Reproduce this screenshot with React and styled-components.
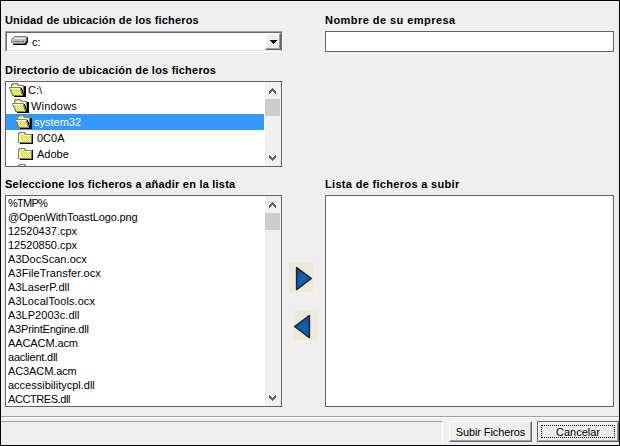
import React from "react";
import styled, { createGlobalStyle, css } from "styled-components";

const GlobalStyle = createGlobalStyle`
  * { box-sizing: border-box; }
  body { margin: 0; font: 11px/14px "Liberation Sans", Arial, sans-serif; color: #000; }
`;

const Window = styled.main`
  width: 620px;
  height: 446px;
  display: flex;
  flex-direction: column;
  overflow: hidden;
  border: 1px solid #000;
  background: #efefef;
`;

const Panels = styled.div`
  display: grid;
  grid-template-columns: 278px 42px 289px;
  grid-template-rows: 180px 226px;
  padding-left: 4px;
  height: 415px;
`;

const Column = styled.section`
  display: flex;
  flex-direction: column;
`;

const Label = styled.label`
  display: block;
  height: ${(p) => p.$height}px;
  padding-top: ${(p) => p.$top}px;
  font-weight: bold;
  line-height: ${(p) => p.$line || 14}px;
  white-space: nowrap;
  letter-spacing: ${(p) => p.$spacing || 0}px;
`;

const Combo = styled.div`
  display: flex;
  align-items: stretch;
  width: 278px;
  height: 21px;
  border: 1px solid;
  border-color: #a0a0a0 #fff #fff #a0a0a0;
  background: #fff;
`;

const ComboInner = styled.div`
  flex: 1;
  display: flex;
  border: 1px solid;
  border-color: #696969 #696969 #e3e3e3 #696969;
`;

const ComboValue = styled.div`
  flex: 1;
  display: flex;
  gap: 4px;
  padding-left: 4px;
  line-height: 19px;
  svg { margin-top: 3px; }
`;

const raised = css`
  border: 1px solid;
  border-color: #fff #696969 #696969 #fff;
  box-shadow: inset -1px -1px #a0a0a0;
  background: #efefef;
`;

const DropButton = styled.button`
  ${raised}
  width: 16px;
  height: 17px;
  padding: 0;
  display: flex;
  align-items: center;
  justify-content: center;
`;

const ListBox = styled.div`
  display: flex;
  width: ${(p) => p.$width}px;
  height: ${(p) => p.$height}px;
  border: 1px solid #646464;
  background: #fff;
  overflow: hidden;
`;

const Items = styled.ul`
  flex: 1;
  margin: 0;
  padding: 0;
  list-style: none;
  overflow: hidden;
`;

const FolderItem = styled.li`
  display: flex;
  gap: ${(p) => p.$gap}px;
  width: 258px;
  height: 16px;
  padding-left: ${(p) => p.$indent}px;
  line-height: 17px;
  letter-spacing: ${(p) => p.$spacing || 0}px;
  color: ${(p) => (p.$selected ? "#fff" : "#000")};
  background: ${(p) => (p.$selected ? "#3399ff" : "#fff")};
`;

const FileItem = styled.li`
  height: 14px;
  padding-left: 2px;
  line-height: 15px;
  white-space: nowrap;
  letter-spacing: ${(p) => p.$spacing || 0}px;
`;

const ScrollTrack = styled.div`
  display: flex;
  flex-direction: column;
  align-items: center;
  width: 16px;
  padding: 6px 1px 5px 0;
  background: #f0f0f0;
`;

const Thumb = styled.div`
  width: 15px;
  height: 17px;
  margin: 5px 0 auto;
  background: #cdcdcd;
`;

const TextInput = styled.input`
  width: 289px;
  height: 21px;
  padding: 2px;
  border: 1px solid #646464;
  border-radius: 0;
  background: #fff;
`;

const Transfer = styled.div`
  display: flex;
  flex-direction: column;
  gap: 19px;
  padding: 82px 0 0 6px;
`;

const ArrowButton = styled.button`
  width: 24px;
  height: 29px;
  padding: 0;
  border: 0;
  margin-left: ${(p) => p.$shift}px;
  background: #eee9d6;
  svg { display: block; }
`;

const Footer = styled.footer`
  display: flex;
  height: 29px;
  padding-top: 4px;
  border-top: 1px solid #a0a0a0;
  box-shadow: inset 0 1px #fff;
`;

const Status = styled.div`
  flex: none;
  width: 442px;
  height: 24px;
  border-top: 1px solid #a0a0a0;
  border-right: 1px solid #fff;
`;

const PushButton = styled.button`
  ${raised}
  width: ${(p) => p.$width}px;
  height: 21px;
  margin-left: ${(p) => p.$gap}px;
  flex: none;
  padding: 0;
  font: 11px/16px "Liberation Sans", Arial, sans-serif;
  letter-spacing: ${(p) => p.$spacing || 0}px;
  ${(p) => p.$focused && css`
    border-color: #646464;
    box-shadow: inset 1px 1px #fff, inset -1px -1px #a0a0a0;
    outline: 1px dotted #000;
    outline-offset: -5px;
  `}
`;

const Chevron = ({ down }) => (
  <svg width="7" height="6" viewBox="0 0 7 6" shapeRendering="crispEdges">
    <path transform={down ? "translate(0 6) scale(1 -1)" : undefined} fill="#606060"
      d="M3 0h1v1h1v1h1v1h1v3H6V5H5V4H4V3H3v1H2v1H1v1H0V3h1V2h1V1h1z" />
  </svg>
);

const Scrollbar = () => (
  <ScrollTrack><Chevron /><Thumb /><Chevron down /></ScrollTrack>
);

const Dither = () => (
  <defs>
    <pattern id="dither" width="2" height="2" patternUnits="userSpaceOnUse">
      <rect width="2" height="2" fill="#ff0" />
      <rect width="1" height="1" fill="#d0d0c8" /><rect x="1" y="1" width="1" height="1" fill="#d0d0c8" />
    </pattern>
  </defs>
);

const OpenFolder = () => (
  <svg width="17" height="16" viewBox="0 0 17 16" shapeRendering="crispEdges">
    <Dither />
    <path fill="#000" d="M15 4h2v11H5v-1h10z" />
    <path fill="url(#dither)" d="M3 2l1-1h4l1 2h5v10H5z" />
    <path fill="none" stroke="#808080" d="M2.5 5V2.5h1v-1h5v1h1v1h5V12" />
    <path fill="url(#dither)" d="M1 6h10l3 7H4z" />
    <path fill="none" stroke="#808080" d="M.5 5.5h11v3h1v3h1v2h-10v-2h-1v-3h-1v-2h-1z" />
    <path stroke="#fff" d="M1 6.5h10M4 4.5h9" />
    <path stroke="#000" d="M12.5 6v2m1 0v3m1 0v3" />
  </svg>
);

const ClosedFolder = () => (
  <svg width="16" height="16" viewBox="0 0 16 16" shapeRendering="crispEdges">
    <Dither />
    <path fill="#000" d="M14 4h1v10H2v-1h12z" />
    <path fill="url(#dither)" stroke="#808080" d="M.5 3.5h1v-1h5v1h1v1h6v8H.5z" />
    <path fill="none" stroke="#fff" d="M1.5 12V4.5M2 3.5h4M7 5.5h6" />
  </svg>
);

const Drive = () => (
  <svg width="17" height="10" viewBox="0 0 17 10">
    <path fill="#000" d="M3 9h12l2-3V1l-2 1z" />
    <path fill="#c0c0c0" stroke="#808080" d="M.5 3.5l3-3h12v4l-2 3H1.5l-1-1z" />
    <path stroke="#eee" d="M3 2.5h11" />
    <path stroke="#777" d="M2 5.5h8" />
    <path stroke="#008000" d="M11 5.5h2" />
    <path stroke="#000" d="M2 8.5h12" />
  </svg>
);

const Arrow = ({ left }) => (
  <svg width="24" height="29" viewBox="0 0 24 29">
    <defs>
      <linearGradient id="blue" x1="0" y1="0" x2="1" y2="1">
        <stop stopColor="#164f91" /><stop offset=".5" stopColor="#1261b2" /><stop offset="1" stopColor="#123f77" />
      </linearGradient>
    </defs>
    <path transform={left ? "translate(24 0) scale(-1 1)" : undefined}
      d="M7.6 4.6V26.6L22.4 15.5z" fill="url(#blue)" stroke="#17263b" strokeWidth="1.5" strokeLinejoin="round" />
  </svg>
);

const folders = [
  { name: "C:\\", indent: 3, open: true },
  { name: "Windows", indent: 6, open: true, spacing: 0.2 },
  { name: "system32", indent: 9, open: true, selected: true },
  { name: "0C0A", indent: 12 },
  { name: "Adobe", indent: 12 },
  { name: "", indent: 12 },
];

const files = [
  ["%TMP%", -0.75], ["@OpenWithToastLogo.png", -0.12], ["12520437.cpx", 0], ["12520850.cpx", 0],
  ["A3DocScan.ocx", 0.05], ["A3FileTransfer.ocx", 0.09], ["A3LaserP.dll", 0.05], ["A3LocalTools.ocx", 0.09],
  ["A3LP2003c.dll", 0.05], ["A3PrintEngine.dll", -0.22], ["AACACM.acm", -0.1], ["aaclient.dll", -0.22],
  ["AC3ACM.acm", -0.1], ["accessibilitycpl.dll", 0], ["ACCTRES.dll", -0.42],
];

export default function App() {
  return (
    <Window>
      <GlobalStyle />
      <Panels>
        <Column>
          <Label $height={30} $top={12} $spacing={0.16}>Unidad de ubicación de los ficheros</Label>
          <Combo>
            <ComboInner>
              <ComboValue><Drive />c:</ComboValue>
              <DropButton aria-label="Abrir">
                <svg width="7" height="4" shapeRendering="crispEdges"><path d="M0 0h7v1H6v1H5v1H4v1H3V3H2V2H1V1H0z" /></svg>
              </DropButton>
            </ComboInner>
          </Combo>
          <Label $height={29} $top={11} $spacing={0.21}>Directorio de ubicación de los ficheros</Label>
          <ListBox $width={277} $height={86}>
            <Items>
              {folders.map((f, i) => (
                <FolderItem key={i} $indent={f.indent} $gap={f.open ? 2 : 3} $spacing={f.spacing} $selected={f.selected}>
                  {f.open ? <OpenFolder /> : <ClosedFolder />}{f.name}
                </FolderItem>
              ))}
            </Items>
            <Scrollbar />
          </ListBox>
        </Column>
        <div />
        <Column>
          <Label $height={30} $top={12} $spacing={0.45}>Nombre de su empresa</Label>
          <TextInput aria-label="Nombre de su empresa" />
        </Column>
        <Column>
          <Label $height={14} $top={0} $line={6} $spacing={0.22}>Seleccione los ficheros a añadir en la lista</Label>
          <ListBox $width={277} $height={212}>
            <Items>{files.map(([name, spacing]) => <FileItem key={name} $spacing={spacing}>{name}</FileItem>)}</Items>
            <Scrollbar />
          </ListBox>
        </Column>
        <Transfer>
          <ArrowButton aria-label="Añadir" $shift={0}><Arrow /></ArrowButton>
          <ArrowButton aria-label="Quitar" $shift={4}><Arrow left /></ArrowButton>
        </Transfer>
        <Column>
          <Label $height={14} $top={0} $line={6} $spacing={0.32}>Lista de ficheros a subir</Label>
          <ListBox $width={289} $height={212} />
        </Column>
      </Panels>
      <Footer>
        <Status />
        <PushButton $width={83} $gap={6} $spacing={-0.1}>Subir Ficheros</PushButton>
        <PushButton $width={82} $gap={5} $focused>Cancelar</PushButton>
      </Footer>
    </Window>
  );
}
